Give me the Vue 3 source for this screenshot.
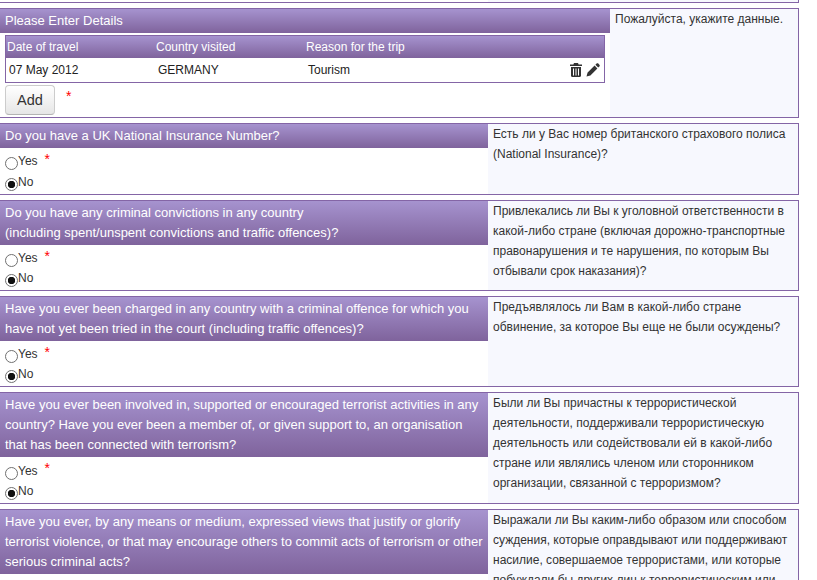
<script setup>
const rows = [
  {
    q: ['Do you have a UK National Insurance Number?'],
    a: 'Есть ли у Вас номер британского страхового полиса (National Insurance)?'
  },
  {
    q: ['Do you have any criminal convictions in any country', '(including spent/unspent convictions and traffic offences)?'],
    a: 'Привлекались ли Вы к уголовной ответственности в какой-либо стране (включая дорожно-транспортные правонарушения и те нарушения, по которым Вы отбывали срок наказания)?'
  },
  {
    q: ['Have you ever been charged in any country with a criminal offence for which you', 'have not yet been tried in the court (including traffic offences)?'],
    a: 'Предъявлялось ли Вам в какой-либо стране обвинение, за которое Вы еще не были осуждены?'
  },
  {
    q: ['Have you ever been involved in, supported or encouraged terrorist activities in any', 'country? Have you ever been a member of, or given support to, an organisation', 'that has been connected with terrorism?'],
    a: 'Были ли Вы причастны к террористической деятельности, поддерживали террористическую деятельность или содействовали ей в какой-либо стране или являлись членом или сторонником организации, связанной с терроризмом?'
  },
  {
    q: ['Have you ever, by any means or medium, expressed views that justify or glorify', 'terrorist violence, or that may encourage others to commit acts of terrorism or other', 'serious criminal acts?'],
    a: 'Выражали ли Вы каким-либо образом или способом суждения, которые оправдывают или поддерживают насилие, совершаемое террористами, или которые побуждали бы других лиц к террористическим или иным тяжким преступлениям?'
  }
]
</script>

<template>
  <div class="page">
    <div class="row stub">
      <div class="left"></div>
      <div class="right"></div>
    </div>

    <section class="row first">
      <div class="left">
        <div class="head">Please Enter Details</div>
        <div class="trips">
          <div class="thead">
            <span>Date of travel</span>
            <span>Country visited</span>
            <span>Reason for the trip</span>
          </div>
          <div class="tbody">
            <span>07 May 2012</span>
            <span>GERMANY</span>
            <span>Tourism</span>
            <div class="icons">
              <svg width="12" height="14" viewBox="0 0 12 14">
                <path fill="#333" d="M4 0h4l.6 1.500H12V3H0V1.500h3.400zM1 4h10v8.800c0 .7-.5 1.200-1.200 1.200H2.200C1.500 14 1 13.500 1 12.800z"/>
                <path stroke="#fff" stroke-width="1" d="M3.500 5.500v7M6 5.500v7M8.500 5.500v7"/>
              </svg>
              <svg width="14" height="14" viewBox="0 0 14 14">
                <path fill="#333" d="M10.600.6c.5-.5 1.200-.5 1.700 0l1.100 1.100c.5.5.5 1.200 0 1.700l-1.200 1.200-2.800-2.800zM8.600 2.600l2.800 2.800-7 7-3.900 1.100 1.100-3.900z"/>
              </svg>
            </div>
          </div>
        </div>
        <div class="actions">
          <button class="add" type="button">Add</button>
          <span class="req">*</span>
        </div>
      </div>
      <div class="right">Пожалуйста, укажите данные.</div>
    </section>

    <section v-for="(r, i) in rows" :key="i" class="row">
      <div class="left">
        <div class="head">
          <div v-for="l in r.q" :key="l">{{ l }}</div>
        </div>
        <div class="radios" :class="'lines-' + r.q.length">
          <label class="opt"><input type="radio" :name="'q' + i" /><span>Yes</span><span class="req">*</span></label>
          <label class="opt"><input type="radio" :name="'q' + i" checked /><span>No</span></label>
        </div>
      </div>
      <div class="right">{{ r.a }}</div>
    </section>
  </div>
</template>

<style>
html, body { margin: 0; height: 580px; overflow: hidden; background: #fff; }
</style>

<style scoped>
.page {
  width: 799px;
  font-family: "Liberation Sans", Arial, sans-serif;
  font-size: 12px;
  line-height: 20px;
  color: #333;
}
.row {
  display: flex;
  align-items: stretch;
  border: 1px solid #8465a6;
  border-left: 0;
  margin-bottom: 5px;
}
.stub { height: 2px; border-top: 0; }
.left { width: 488px; flex: none; background: #fff; }
.right {
  flex: 1;
  background: #f7f8fe;
  padding: 0 5px;
}
.first .left { width: 610px; }
.head, .thead {
  background: linear-gradient(#a693cf, #7f639c);
  color: #fff;
}
.head { padding: 2px 5px; font-size: 13px; }
.trips {
  margin: 2px 5px 0;
  border: 1px solid #8465a6;
}
.thead, .tbody {
  display: grid;
  grid-template-columns: 149px 150px 1fr 40px;
}
.thead { height: 22px; line-height: 22px; }
.thead span { padding-left: 1px; }
.tbody { height: 24px; line-height: 24px; color: #222; }
.tbody span { padding-left: 3px; }
.icons {
  grid-column: 4;
  display: flex;
  justify-content: flex-end;
  align-items: center;
  gap: 4px;
  padding-right: 4px;
}
.actions {
  display: flex;
  align-items: flex-start;
  padding: 2px 5px;
}
.add {
  width: 50px;
  height: 30px;
  padding: 0;
  font: 14.5px "Liberation Sans", Arial, sans-serif;
  color: #333;
  background: linear-gradient(#fff, #e6e6e6);
  border: 1px solid #ccc;
  border-bottom-color: #b3b3b3;
  border-radius: 4px;
}
.req { color: #f00; margin-left: 7px; font-size: 14px; line-height: 14px; }
.actions .req { margin-left: 11px; margin-top: 4px; }
.radios { padding: 3px 5px 2px; }
.radios.lines-1 { display: flex; flex-direction: column; gap: 1px; }
.radios.lines-3 { padding: 4px 5px 2px; }
.opt { display: flex; height: 20px; align-items: flex-start; }
.opt .req { margin-top: 1px; }
.radios.lines-3 .opt .req { margin-top: 0; }
.opt input {
  appearance: none;
  width: 13px;
  height: 13px;
  margin: 6px 0 0;
  border: 1px solid #707070;
  border-radius: 50%;
  background: #fff;
}
.opt input:checked {
  background: radial-gradient(circle, #111 0 3.4px, #fff 4px);
}
</style>
